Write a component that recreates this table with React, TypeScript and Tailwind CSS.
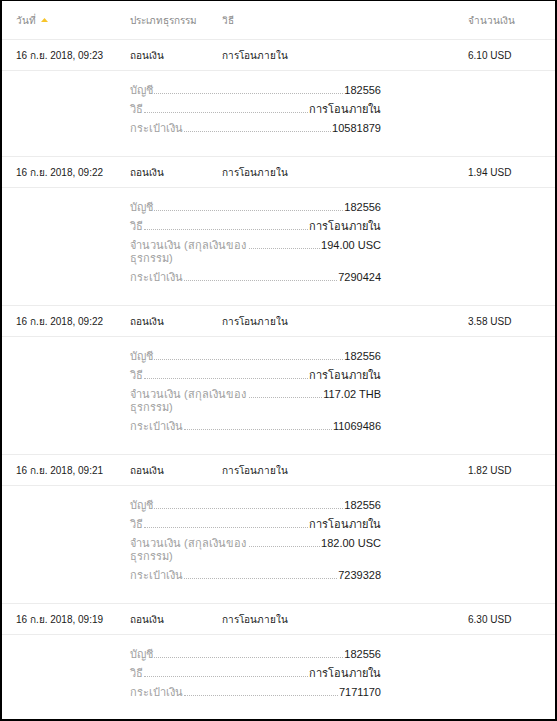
import React from "react";

type Detail = { label: string; value: string };
type Row = { date: string; type: string; method: string; amount: string; details: Detail[] };

const rows: Row[] = [
  {
    date: "16 ก.ย. 2018, 09:23",
    type: "ถอนเงิน",
    method: "การโอนภายใน",
    amount: "6.10 USD",
    details: [
      { label: "บัญชี", value: "182556" },
      { label: "วิธี", value: "การโอนภายใน" },
      { label: "กระเป๋าเงิน", value: "10581879" },
    ],
  },
  {
    date: "16 ก.ย. 2018, 09:22",
    type: "ถอนเงิน",
    method: "การโอนภายใน",
    amount: "1.94 USD",
    details: [
      { label: "บัญชี", value: "182556" },
      { label: "วิธี", value: "การโอนภายใน" },
      { label: "จำนวนเงิน (สกุลเงินของ ธุรกรรม)", value: "194.00 USC" },
      { label: "กระเป๋าเงิน", value: "7290424" },
    ],
  },
  {
    date: "16 ก.ย. 2018, 09:22",
    type: "ถอนเงิน",
    method: "การโอนภายใน",
    amount: "3.58 USD",
    details: [
      { label: "บัญชี", value: "182556" },
      { label: "วิธี", value: "การโอนภายใน" },
      { label: "จำนวนเงิน (สกุลเงินของ ธุรกรรม)", value: "117.02 THB" },
      { label: "กระเป๋าเงิน", value: "11069486" },
    ],
  },
  {
    date: "16 ก.ย. 2018, 09:21",
    type: "ถอนเงิน",
    method: "การโอนภายใน",
    amount: "1.82 USD",
    details: [
      { label: "บัญชี", value: "182556" },
      { label: "วิธี", value: "การโอนภายใน" },
      { label: "จำนวนเงิน (สกุลเงินของ ธุรกรรม)", value: "182.00 USC" },
      { label: "กระเป๋าเงิน", value: "7239328" },
    ],
  },
  {
    date: "16 ก.ย. 2018, 09:19",
    type: "ถอนเงิน",
    method: "การโอนภายใน",
    amount: "6.30 USD",
    details: [
      { label: "บัญชี", value: "182556" },
      { label: "วิธี", value: "การโอนภายใน" },
      { label: "กระเป๋าเงิน", value: "7171170" },
    ],
  },
];

const grid = "grid grid-cols-[128px_92px_246px_1fr]";

export default function App() {
  return (
    <div
      className="h-[721px] overflow-hidden bg-white border-t border-l-2 border-r-2 border-b-2 border-black"
      style={{ fontFamily: '"Liberation Sans", Arial, "Noto Sans", sans-serif' }}
    >
      <div className={`${grid} h-[39px] items-center border-b border-[#ececec] text-[10px] text-[#8a8a8a]`}>
        <div className="pl-[14px] flex items-center gap-[5px]">
          <span>วันที่</span>
          <svg width="7" height="4" viewBox="0 0 7 4" className="mt-[-1px]">
            <path d="M0 4 L3.5 0 L7 4 Z" fill="#f7c52b" />
          </svg>
        </div>
        <div>ประเภทธุรกรรม</div>
        <div>วิธี</div>
        <div>จำนวนเงิน</div>
      </div>
      {rows.map((r, i) => (
        <div key={i} className="border-b border-[#ececec]">
          <div className={`${grid} h-[31px] items-center border-b border-[#ececec] text-[10px] text-[#1a1a1a]`}>
            <div className="pl-[14px]">{r.date}</div>
            <div>{r.type}</div>
            <div>{r.method}</div>
            <div>{r.amount}</div>
          </div>
          <div className="pl-[128px] pt-[13px] pb-[21px]">
            <div className="w-[251px] flex flex-col gap-[6px] text-[11px] leading-[13px]">
              {r.details.map((d, j) => (
                <div key={j} className="flex items-start">
                  <span className="max-w-[118px] text-[#a0a0a0] shrink-0">{d.label}</span>
                  <span className="flex-1 h-[10px] border-b border-dotted border-[#b8b8b8] mx-[1px]" />
                  <span className="whitespace-nowrap text-[#1a1a1a]">{d.value}</span>
                </div>
              ))}
            </div>
          </div>
        </div>
      ))}
    </div>
  );
}
